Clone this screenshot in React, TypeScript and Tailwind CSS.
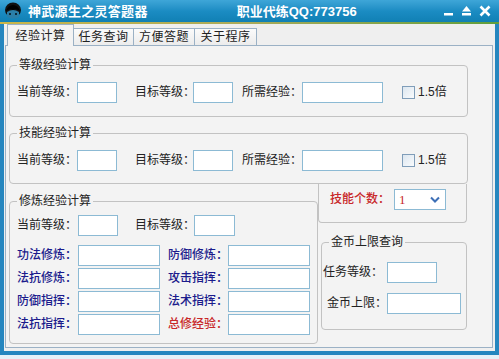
import React from "react";

const FONT = "font-['Liberation_Sans','Noto_Sans_CJK_SC',sans-serif]";
const inputBase = "h-[21px] shrink-0 border border-[#8cbad4] bg-white";
const lbl = "shrink-0 whitespace-nowrap text-[12px] leading-[21px] text-[#222]";
const blue = "shrink-0 whitespace-nowrap text-[12px] leading-[21px] font-medium text-[#1b1b8c]";

function Legend({ children }: { children: React.ReactNode }) {
  return <legend className="ml-[7px] px-[2px] text-[12px] leading-[14px] text-[#222]">{children}</legend>;
}

function AppIcon() {
  return (
    <svg width="18" height="18" viewBox="0 0 18 18">
      <ellipse cx="9" cy="8" rx="8" ry="7.5" fill="#111" />
      <path d="M3 10 Q9 6 15 10 L15 15 Q9 18 3 15 Z" fill="#2a7fa8" />
      <rect x="5" y="11" width="2" height="2" fill="#0b2b3c" />
      <rect x="11" y="11" width="2" height="2" fill="#0b2b3c" />
      <path d="M2 9 Q4 3 9 3 Q14 3 16 9 Q12 6 9 8 Q6 6 2 9 Z" fill="#000" />
    </svg>
  );
}

function Checkbox() {
  return <span className="h-[13px] w-[13px] shrink-0 border border-[#7f9db9] bg-gradient-to-br from-[#dce6ef] to-[#f9fbfd]" />;
}

function LevelRow() {
  return (
    <div className="flex items-center pl-[7px]">
      <span className={`${lbl} w-[60px]`}>当前等级：</span>
      <input className={`${inputBase} w-[40px]`} />
      <span className={`${lbl} ml-[18px] w-[58px]`}>目标等级：</span>
      <input className={`${inputBase} w-[40px]`} />
      <span className={`${lbl} ml-[9px] w-[60px]`}>所需经验：</span>
      <input className={`${inputBase} w-[81px]`} />
      <span className="ml-[19px] flex items-center">
        <Checkbox />
        <span className="ml-[3px] text-[12px] leading-[21px] text-[#222]">1.5倍</span>
      </span>
    </div>
  );
}

const cultivate = [
  ["功法修炼：", "防御修炼："],
  ["法抗修炼：", "攻击指挥："],
  ["防御指挥：", "法术指挥："],
  ["法抗指挥：", "总修经验："],
];

export default function App() {
  return (
    <div className={`${FONT} h-[359px] w-[499px] overflow-hidden bg-[#e6f1f8]`}>
      <div className="flex h-[355px] w-[499px] flex-col bg-[#efefef]">
        {/* title bar */}
        <div className="flex h-[22px] shrink-0 items-center bg-gradient-to-b from-[#3ea6d8] via-[#1b8cc3] to-[#1080b4] pl-[4px] pr-[8px]">
          <AppIcon />
          <span className="ml-[6px] text-[13px] font-bold leading-none tracking-[0.3px] text-white">神武源生之灵答题器</span>
          <span className="ml-[89px] text-[13px] font-bold leading-none text-white">职业代练QQ:773756</span>
          <div className="ml-auto flex items-center gap-[7px]">
            <svg width="11" height="12" viewBox="0 0 11 12">
              <rect x="1" y="8" width="9" height="2.5" fill="#fff" />
            </svg>
            <svg width="11" height="12" viewBox="0 0 11 12">
              <path d="M5.5 1 L10 6.5 L1 6.5 Z" fill="#fff" />
              <rect x="1" y="8" width="9" height="2.5" fill="#fff" />
            </svg>
            <svg width="12" height="12" viewBox="0 0 12 12">
              <path d="M1.5 1.5 L10.5 10.5 M10.5 1.5 L1.5 10.5" stroke="#fff" strokeWidth="2.6" />
            </svg>
          </div>
        </div>
        <div className="h-[2px] shrink-0 bg-gradient-to-r from-[#c9b548] via-[#a9aa5a] to-[#5f9e3c]" />

        {/* body */}
        <div className="flex flex-1 flex-col border-x-[4px] border-b-[4px] border-[#2586bf] pb-[3px] pl-[1px] pr-[3px]">
          {/* tabs */}
          <div className="relative z-10 -mb-[1px] flex h-[22px] items-end pl-[2px] text-[12px] tracking-[0.5px] text-[#222]">
            <div className="flex h-[22px] w-[67px] items-center justify-center border border-b-0 border-[#9bb1c5] bg-[#f3f3f3]">经验计算</div>
            <div className="flex h-[18px] w-[60px] items-center justify-center border border-l-0 border-[#9bb1c5] bg-gradient-to-b from-[#fbfbfb] to-[#ececec]">任务查询</div>
            <div className="flex h-[18px] w-[61px] items-center justify-center border border-l-0 border-[#9bb1c5] bg-gradient-to-b from-[#fbfbfb] to-[#ececec]">方便答题</div>
            <div className="flex h-[18px] w-[62px] items-center justify-center border border-l-0 border-[#9bb1c5] bg-gradient-to-b from-[#fbfbfb] to-[#ececec]">关于程序</div>
          </div>

          {/* panel */}
          <div className="flex w-[488px] flex-1 flex-col border border-[#9bb1c5] bg-[#f3f3f3] pl-[3px] pt-[12px]">
            <fieldset className="w-[459px] rounded-[4px] border border-[#c2c2c2] pb-[13px] pt-[10px]">
              <Legend>等级经验计算</Legend>
              <LevelRow />
            </fieldset>

            <fieldset className="mt-[9px] w-[459px] rounded-[4px] border border-[#c2c2c2] pb-[12px] pt-[10px]">
              <Legend>技能经验计算</Legend>
              <LevelRow />
            </fieldset>

            <div className="flex">
              <fieldset className="mt-[10px] w-[309px] rounded-[4px] border border-[#c2c2c2] pb-[8px] pt-[7px]">
                <Legend>修炼经验计算</Legend>
                <div className="flex items-center pl-[7px]">
                  <span className={`${lbl} w-[61px]`}>当前等级：</span>
                  <input className={`${inputBase} w-[40px]`} />
                  <span className={`${lbl} ml-[17px] w-[59px]`}>目标等级：</span>
                  <input className={`${inputBase} w-[41px]`} />
                </div>
                <div className="mt-[9px] flex flex-col gap-[2px]">
                  {cultivate.map(([a, b], i) => (
                    <div key={a} className="flex items-center pl-[7px]">
                      <span className={`${blue} w-[61px]`}>{a}</span>
                      <input className={`${inputBase} w-[82px]`} />
                      <span className={`${i === 3 ? "shrink-0 whitespace-nowrap text-[12px] leading-[21px] font-medium text-[#c8282a]" : blue} ml-[8px] w-[60px]`}>{b}</span>
                      <input className={`${inputBase} w-[82px]`} />
                    </div>
                  ))}
                </div>
              </fieldset>

              <div className="flex w-[149px] flex-col">
                <div className="flex h-[39px] items-start rounded-b-[4px] border-x border-b border-[#c2c2c2] pl-[11px] pt-[5px]">
                  <span className="shrink-0 whitespace-nowrap text-[12px] font-medium leading-[21px] text-[#c8282a]">技能个数：</span>
                  <div className="ml-[4px] flex h-[21px] w-[52px] items-center justify-between border border-[#8cbad4] bg-white pl-[4px] pr-[5px]">
                    <span className="font-['Liberation_Serif',serif] text-[13px] leading-none text-[#c8282a]">1</span>
                    <svg width="10" height="7" viewBox="0 0 10 7">
                      <path d="M1 1.5 L5 5.5 L9 1.5" fill="none" stroke="#3d6fb6" strokeWidth="2" />
                    </svg>
                  </div>
                </div>

                <fieldset className="ml-[3px] mt-[12px] w-[146px] rounded-[4px] border border-[#c2c2c2] pb-[15px] pt-[13px]">
                  <Legend>金币上限查询</Legend>
                  <div className="flex items-center pl-[1px]">
                    <span className={`${lbl} w-[60px]`}>任务等级：</span>
                    <input className={`${inputBase} ml-[4px] w-[50px]`} />
                  </div>
                  <div className="mt-[10px] flex items-center pl-[5px]">
                    <span className={`${lbl} w-[60px]`}>金币上限：</span>
                    <input className={`${inputBase} w-[74px]`} />
                  </div>
                </fieldset>
              </div>
            </div>
          </div>
        </div>
      </div>
    </div>
  );
}
